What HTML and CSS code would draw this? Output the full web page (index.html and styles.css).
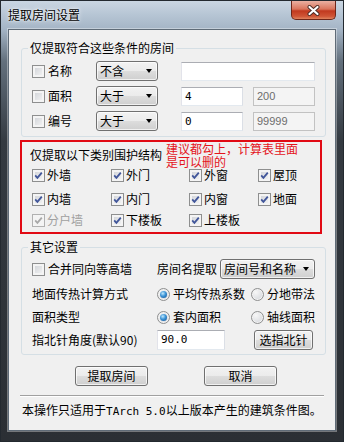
FILE: index.html
```html
<!DOCTYPE html>
<html lang="zh-CN">
<head>
    <meta charset="UTF-8">
    <meta name="viewport" content="width=device-width, initial-scale=1.0">
    <title>提取房间设置</title>
    <link rel="stylesheet" href="styles.css">
</head>
<body>
<div class="window">
    <div class="titlebar">
        <span class="title">提取房间设置</span>
        <div class="close">
            <svg width="13" height="11" viewBox="0 0 13 11">
                <path d="M2.5 2 L10.5 9 M10.5 2 L2.5 9" stroke="#4b2a24" stroke-width="4" stroke-linecap="round"/>
                <path d="M2.5 2 L10.5 9 M10.5 2 L2.5 9" stroke="#fff" stroke-width="2.2" stroke-linecap="round"/>
            </svg>
        </div>
    </div>

    <div class="client">
        <!-- conditions -->
        <fieldset class="group g1">
            <legend>仅提取符合这些条件的房间</legend>
            <div class="frow">
                <label class="chk col1"><span class="cb"></span>名称</label>
                <span class="combo">不含<i class="arrow"></i></span>
                <span class="edit long"></span>
            </div>
            <div class="frow">
                <label class="chk col1"><span class="cb"></span>面积</label>
                <span class="combo">大于<i class="arrow"></i></span>
                <span class="edit short first">4</span>
                <span class="edit short off">200</span>
            </div>
            <div class="frow">
                <label class="chk col1"><span class="cb"></span>编号</label>
                <span class="combo">大于<i class="arrow"></i></span>
                <span class="edit short first">0</span>
                <span class="edit short off">99999</span>
            </div>
        </fieldset>

        <!-- structure types -->
        <div class="redbox">
            <div class="rb-head">
                <span class="rb-title">仅提取以下类别围护结构</span>
                <span class="note"><span class="line">建议都勾上，计算表里面</span><span class="line">是可以删的</span></span>
            </div>
            <div class="cbrow r1">
                <label class="chk"><span class="cb"><svg viewBox="0 0 11 11"><path d="M2.2 5.4 L4.4 7.8 L8.8 2.6"/></svg></span>外墙</label>
                <label class="chk"><span class="cb"><svg viewBox="0 0 11 11"><path d="M2.2 5.4 L4.4 7.8 L8.8 2.6"/></svg></span>外门</label>
                <label class="chk"><span class="cb"><svg viewBox="0 0 11 11"><path d="M2.2 5.4 L4.4 7.8 L8.8 2.6"/></svg></span>外窗</label>
                <label class="chk"><span class="cb"><svg viewBox="0 0 11 11"><path d="M2.2 5.4 L4.4 7.8 L8.8 2.6"/></svg></span>屋顶</label>
            </div>
            <div class="cbrow r2">
                <label class="chk"><span class="cb"><svg viewBox="0 0 11 11"><path d="M2.2 5.4 L4.4 7.8 L8.8 2.6"/></svg></span>内墙</label>
                <label class="chk"><span class="cb"><svg viewBox="0 0 11 11"><path d="M2.2 5.4 L4.4 7.8 L8.8 2.6"/></svg></span>内门</label>
                <label class="chk"><span class="cb"><svg viewBox="0 0 11 11"><path d="M2.2 5.4 L4.4 7.8 L8.8 2.6"/></svg></span>内窗</label>
                <label class="chk"><span class="cb"><svg viewBox="0 0 11 11"><path d="M2.2 5.4 L4.4 7.8 L8.8 2.6"/></svg></span>地面</label>
            </div>
            <div class="cbrow r3">
                <label class="chk disabled"><span class="cb"><svg viewBox="0 0 11 11"><path d="M2.2 5.4 L4.4 7.8 L8.8 2.6"/></svg></span>分户墙</label>
                <label class="chk"><span class="cb"><svg viewBox="0 0 11 11"><path d="M2.2 5.4 L4.4 7.8 L8.8 2.6"/></svg></span>下楼板</label>
                <label class="chk"><span class="cb"><svg viewBox="0 0 11 11"><path d="M2.2 5.4 L4.4 7.8 L8.8 2.6"/></svg></span>上楼板</label>
            </div>
        </div>

        <!-- other settings -->
        <fieldset class="group g3">
            <legend>其它设置</legend>
            <div class="orow o1">
                <label class="chk col3"><span class="cb"></span>合并同向等高墙</label>
                <span class="namelbl">房间名提取</span>
                <span class="combo wide">房间号和名称<i class="arrow"></i></span>
            </div>
            <div class="orow">
                <span class="col3">地面传热计算方式</span>
                <label class="opt first"><span class="radio on"></span>平均传热系数</label>
                <label class="opt"><span class="radio"></span>分地带法</label>
            </div>
            <div class="orow">
                <span class="col3">面积类型</span>
                <label class="opt first"><span class="radio on"></span>套内面积</label>
                <label class="opt"><span class="radio"></span>轴线面积</label>
            </div>
            <div class="orow">
                <span class="col3">指北针角度(默认90)</span>
                <span class="edit angle">90.0</span>
                <button class="btn pick">选指北针</button>
            </div>
        </fieldset>

        <div class="btnrow">
            <button class="btn">提取房间</button>
            <button class="btn">取消</button>
        </div>
        <div class="sep"></div>
        <p class="footer">本操作只适用于<span class="mono">TArch 5.0</span>以上版本产生的建筑条件图。</p>
    </div>
</div>
</body>
</html>
```

FILE: styles.css
```css
body {
    margin: 0;
    font-family: "Noto Sans CJK SC", sans-serif;
    font-size: 12px;
    color: #000;
}

.window {
    width: 344px;
    height: 442px;
    box-sizing: border-box;
    border: 1px solid #23292f;
    padding: 0 7px 10px;
    display: flex;
    flex-direction: column;
    background: linear-gradient(180deg, #cad6e2 0px, #b6c5d4 14px, #a5b5c6 28px, #63707d 60px, #343a41 140px, #2b2f34 100%);
}

/* title bar */
.titlebar {
    height: 28px;
    display: flex;
    justify-content: space-between;
    align-items: center;
}

.title {
    line-height: 14px;
    text-shadow: 0 0 5px rgba(255, 255, 255, 0.9), 0 0 2px #fff;
}

.close {
    align-self: flex-start;
    width: 45px;
    height: 19px;
    box-sizing: border-box;
    border: 1px solid #6e2619;
    border-top: none;
    border-radius: 0 0 5px 5px;
    background: linear-gradient(180deg, #eab0a2 0%, #d9745c 45%, #c1391f 55%, #cf5536 85%, #e0845f 100%);
    display: flex;
    justify-content: center;
    align-items: center;
}

/* client area */
.client {
    flex: 1;
    background: #f0f0f0;
    border: 1px solid #5f6b77;
    box-shadow: 0 0 0 1px rgba(255, 255, 255, 0.35);
}

.group {
    margin: 0 0 0 12px;
    width: 305px;
    box-sizing: border-box;
    border: 1px solid #d5dfe5;
    border-radius: 3px;
    padding: 0 0 0 10px;
    min-inline-size: 0;
}

.group legend {
    padding: 0 2px;
    margin-left: -4px;
    line-height: 14px;
}

.g1 {
    margin-top: 11px;
    padding-top: 6px;
    padding-bottom: 5px;
}

.frow {
    display: flex;
    align-items: center;
    height: 20px;
    margin-bottom: 5px;
}

.frow:last-child {
    margin-bottom: 0;
}

.chk {
    display: flex;
    align-items: center;
    gap: 3px;
    line-height: 14px;
}

.col1 {
    width: 64px;
}

/* checkbox */
.cb {
    width: 13px;
    height: 13px;
    box-sizing: border-box;
    border: 1px solid #8e8f8f;
    background: linear-gradient(135deg, #cdd0d5, #f7f7f7);
    box-shadow: inset 0 0 0 2px #f4f4f4;
    display: flex;
    flex-shrink: 0;
}

.cb svg {
    width: 11px;
    height: 11px;
}

.cb path {
    fill: none;
    stroke: #41569a;
    stroke-width: 1.8;
}

.disabled {
    color: #a0a0a0;
}

.disabled .cb {
    border-color: #b1b1b1;
    background: #f4f4f4;
}

.disabled .cb path {
    stroke: #a8a8a8;
}

/* combo box */
.combo {
    width: 62px;
    height: 20px;
    box-sizing: border-box;
    border: 1px solid #707070;
    border-radius: 3px;
    background: linear-gradient(180deg, #f2f2f2 0%, #ebebeb 50%, #dddddd 51%, #cfcfcf 100%);
    box-shadow: inset 0 0 0 1px rgba(255, 255, 255, 0.7);
    display: flex;
    justify-content: space-between;
    align-items: center;
    padding: 0 5px 0 3px;
    line-height: 14px;
}

.combo.wide {
    width: 95px;
}

.arrow {
    width: 0;
    height: 0;
    border-left: 3.5px solid transparent;
    border-right: 3.5px solid transparent;
    border-top: 4px solid #000;
}

/* edit box */
.edit {
    height: 19px;
    box-sizing: border-box;
    border: 1px solid;
    border-color: #abadb3 #dbdfe6 #e3e9ef #e2e3ea;
    background: #fff;
    padding: 0 3px;
    display: flex;
    align-items: center;
    font-family: "DejaVu Sans Mono", monospace;
    font-size: 11px;
}

.edit.long {
    width: 134px;
    margin-left: 23px;
}

.edit.short {
    width: 62px;
    margin-left: 10px;
}

.edit.short.first {
    margin-left: 23px;
}

.edit.off {
    background: #f4f4f4;
    border-color: #c2c2c2;
    color: #6d6d6d;
    font-family: "Liberation Sans", sans-serif;
}

/* red box */
.redbox {
    margin: 3px 0 0 11px;
    width: 302px;
    height: 94px;
    box-sizing: border-box;
    border: 2px solid #e10a14;
}

.rb-head {
    display: flex;
    align-items: flex-start;
    padding-left: 8px;
    height: 26px;
}

.rb-title {
    margin-top: 7px;
    line-height: 12px;
}

.note {
    margin-left: 4px;
    color: #e4141c;
    display: flex;
    flex-direction: column;
}

.note .line {
    height: 13px;
    line-height: 13px;
    overflow: visible;
}

.cbrow {
    display: grid;
    grid-template-columns: 79px 78px 69px auto;
    height: 14px;
    padding-left: 10px;
}

.cbrow .chk {
    gap: 2px;
}

.r2 {
    margin-top: 10px;
}

.r3 {
    margin-top: 7px;
}

/* other settings */
.g3 {
    margin-top: 6px;
    padding-top: 4px;
    padding-bottom: 4px;
}

.orow {
    display: flex;
    align-items: center;
    height: 20px;
    margin-top: 3px;
    line-height: 14px;
}

.orow.o1 {
    height: 22px;
    margin-top: 0;
    margin-bottom: 4px;
}

.col3 {
    width: 125px;
    flex-shrink: 0;
}

.namelbl {
    margin-right: 3px;
}

.opt {
    display: flex;
    align-items: center;
    gap: 3px;
}

.opt.first {
    width: 94px;
}

.radio {
    width: 13px;
    height: 13px;
    box-sizing: border-box;
    border: 1px solid #8e8f8f;
    border-radius: 50%;
    background: radial-gradient(circle at 35% 30%, #f7f7f7, #cfd2d7);
    box-shadow: inset 0 0 0 1px #f2f2f2;
    display: flex;
    justify-content: center;
    align-items: center;
}

.radio.on::after {
    content: "";
    width: 7px;
    height: 7px;
    border-radius: 50%;
    background: radial-gradient(circle at 40% 35%, #bfe8fc 0, #3b93d6 45%, #104d8e 100%);
}

.edit.angle {
    width: 68px;
    height: 20px;
}

.btn {
    height: 20px;
    box-sizing: border-box;
    border: 1px solid #707070;
    border-radius: 3px;
    background: linear-gradient(180deg, #f2f2f2 0%, #ebebeb 50%, #dddddd 51%, #cfcfcf 100%);
    box-shadow: inset 0 0 0 1px rgba(255, 255, 255, 0.7);
    font-family: inherit;
    font-size: 12px;
    line-height: 14px;
    padding: 0;
    color: #000;
}

.btn.pick {
    width: 59px;
    margin-left: 29px;
}

.btnrow {
    display: flex;
    gap: 56px;
    margin: 11px 0 0 66px;
}

.btnrow .btn {
    width: 73px;
}

.sep {
    margin: 9px 0 0 11px;
    width: 304px;
    border-top: 1px solid #a0a0a0;
    border-bottom: 1px solid #fff;
}

.footer {
    margin: 6px 0 0 13px;
    line-height: 14px;
}

.mono {
    font-family: "DejaVu Sans Mono", monospace;
    font-size: 11px;
}
```
